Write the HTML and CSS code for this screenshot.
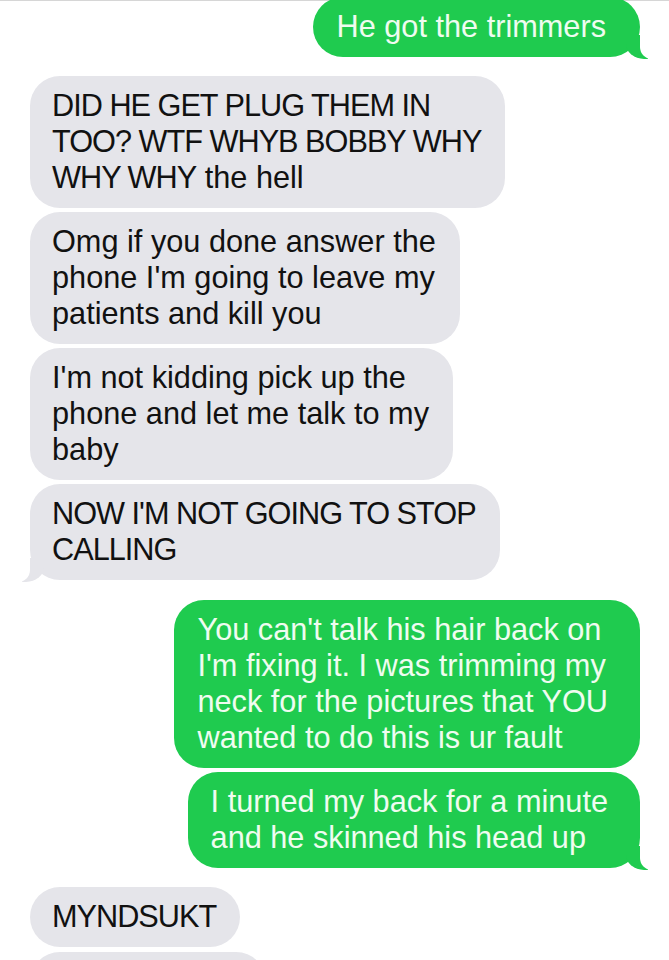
FILE: index.html
```html
<!DOCTYPE html>
<html lang="en">
<head>
<meta charset="utf-8">
<title>Messages</title>
<link rel="stylesheet" href="styles.css">
</head>
<body>
<div class="thread">
  <div class="msg me tail first">He got the trimmers</div>

  <div class="msg them group-start"><span class="caps">DID HE GET PLUG THEM IN<br>TOO? WTF WHYB BOBBY WHY<br>WHY WHY</span> the hell</div>
  <div class="msg them">Omg if you done answer the<br>phone I'm going to leave my<br>patients and kill you</div>
  <div class="msg them">I'm not kidding pick up the<br>phone and let me talk to my<br>baby</div>
  <div class="msg them tail"><span class="caps">NOW I'M NOT GOING TO STOP<br>CALLING</span></div>

  <div class="msg me group-start">You can't talk his hair back on<br>I'm fixing it. I was trimming my<br>neck for the pictures that YOU<br>wanted to do this is ur fault</div>
  <div class="msg me tail">I turned my back for a minute<br>and he skinned his head up</div>

  <div class="msg them group-start"><span class="caps">MYNDSUKT</span></div>
  <div class="msg them blank"></div>
</div>
</body>
</html>
```

FILE: styles.css
```css
html, body {
  margin: 0;
  padding: 0;
  background: #ffffff;
}

body {
  width: 669px;
  height: 960px;
  overflow: hidden;
  font-family: "Liberation Sans", Arial, Helvetica, sans-serif;
}

.thread {
  border-top: 1px solid #d6d6d6;
  display: flex;
  flex-direction: column;
  padding: 0 29px 0 30px;
}

.msg {
  position: relative;
  font-size: 30.7px;
  line-height: 36px;
  padding: 12px 24px 12px 22px;
  border-radius: 30px;
  margin-top: 4px;
  white-space: nowrap;
}

.caps {
  letter-spacing: -1px;
}

.msg.first {
  margin-top: -4px;
  padding-left: 24px;
  padding-right: 34px;
}

.msg.group-start {
  margin-top: 19px;
}

.msg.me.group-start {
  margin-top: 20px;
}

.them {
  align-self: flex-start;
  background: #e5e5ea;
  color: #111111;
}

.me {
  align-self: flex-end;
  background: #1fcb4f;
  color: #effcf0;
  padding-left: 23px;
  padding-right: 32px;
}

.blank {
  width: 190px;
  height: 36px;
  margin-top: 5px;
}

/* bubble tails */
.tail::before,
.tail::after {
  content: "";
  position: absolute;
  bottom: -2px;
  height: 24px;
}

.me.tail::before {
  right: -8px;
  width: 22px;
  background: #1fcb4f;
  border-bottom-left-radius: 18px 15px;
}

.me.tail::after {
  right: -28px;
  width: 28px;
  background: #ffffff;
  border-bottom-left-radius: 12px;
}

.them.tail::before {
  left: -8px;
  width: 22px;
  background: #e5e5ea;
  border-bottom-right-radius: 18px 15px;
}

.them.tail::after {
  left: -28px;
  width: 28px;
  background: #ffffff;
  border-bottom-right-radius: 12px;
}
```
